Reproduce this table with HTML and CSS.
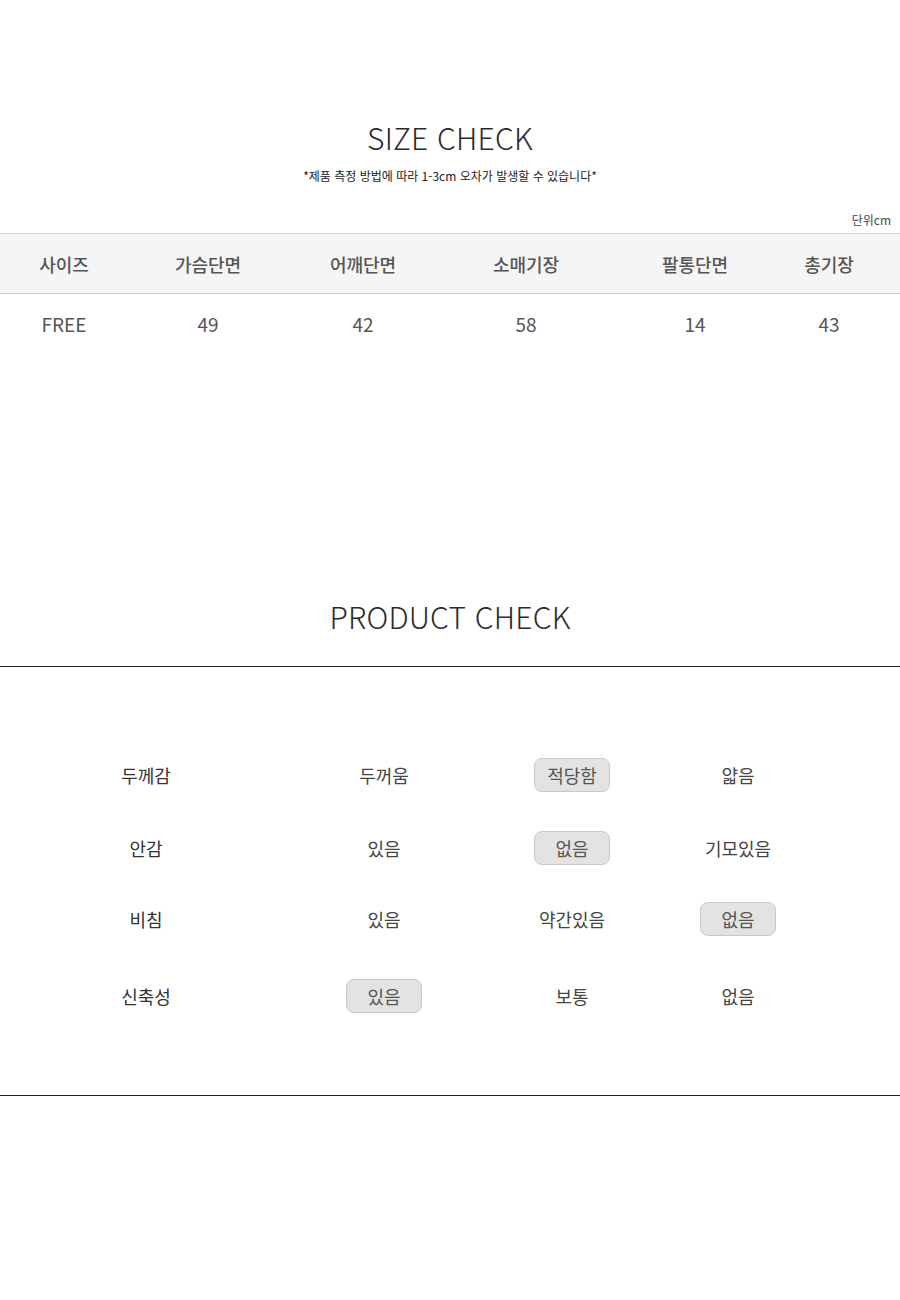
FILE: index.html
```html
<!DOCTYPE html>
<html lang="ko">
<head>
<meta charset="utf-8">
<link rel="stylesheet" href="styles.css">
</head>
<body>
<section class="size">
  <h2 class="title">SIZE CHECK</h2>
  <p class="note">*제품 측정 방법에 따라 1-3cm 오차가 발생할 수 있습니다*</p>
  <p class="unit">단위cm</p>
  <div class="table">
    <div class="row head">
      <span>사이즈</span><span>가슴단면</span><span>어깨단면</span><span>소매기장</span><span>팔통단면</span><span>총기장</span>
    </div>
    <div class="row body">
      <span>FREE</span><span>49</span><span>42</span><span>58</span><span>14</span><span>43</span>
    </div>
  </div>
</section>
<section class="product">
  <h2 class="title">PRODUCT CHECK</h2>
  <div class="checks">
    <span class="label">두께감</span><span>두꺼움</span><span class="on">적당함</span><span>얇음</span>
    <span class="label">안감</span><span>있음</span><span class="on">없음</span><span>기모있음</span>
    <span class="label">비침</span><span>있음</span><span>약간있음</span><span class="on">없음</span>
    <span class="label">신축성</span><span class="on">있음</span><span>보통</span><span>없음</span>
  </div>
</section>
</body>
</html>
```
FILE: styles.css
```css
* { box-sizing: border-box; }
body {
  margin: 0;
  background: #fff;
  font-family: "Noto Sans CJK KR", "Noto Sans", sans-serif;
  color: #333;
}
.title {
  margin: 0;
  font-size: 30px;
  line-height: 40px;
  font-weight: 300;
  text-align: center;
  color: #2b2b2b;
  letter-spacing: 0.2px;
}
.size { padding-top: 117px; }
.note {
  margin: 11px 0 0;
  font-size: 12px;
  line-height: 16px;
  text-align: center;
  color: #222;
}
.unit {
  margin: 28px 0 0;
  padding-right: 9px;
  font-size: 12px;
  line-height: 16px;
  text-align: right;
  color: #444;
}
.table { margin-top: 5px; }
.row {
  display: grid;
  grid-template-columns: 128px 160px 150px 176px 162px 106px;
  align-items: center;
  text-align: center;
}
.head {
  height: 61px;
  background: #f5f5f5;
  border-top: 1px solid #cfcfcf;
  border-bottom: 1px solid #cfcfcf;
  font-size: 18px;
  font-weight: 500;
  color: #555;
}
.body {
  height: 62px;
  padding-bottom: 4px;
  font-size: 19px;
  color: #555;
}
.product { padding-top: 240px; }
.checks {
  margin-top: 30px;
  border-top: 1px solid #222;
  border-bottom: 1px solid #222;
  padding: 71px 0 57px;
  display: grid;
  grid-template-columns: 292px 184px 192px 140px;
  grid-template-rows: 74px 72px 70px 84px;
  align-items: center;
  justify-items: center;
  font-size: 18px;
  color: #444;
}
.checks .label { color: #333; }
.checks .on {
  width: 76px;
  height: 34px;
  line-height: 32px;
  text-align: center;
  background: #e3e3e3;
  border: 1px solid #c8c8c8;
  border-radius: 8px;
  color: #555;
}
```
